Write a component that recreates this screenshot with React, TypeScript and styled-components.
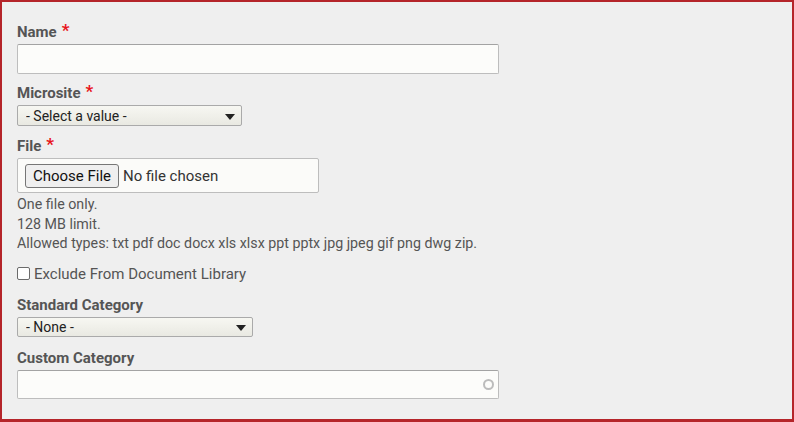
import React from "react";
import styled, { createGlobalStyle } from "styled-components";

const GlobalStyle = createGlobalStyle`
  html, body {
    margin: 0;
    padding: 0;
    background: #efefef;
  }
  body {
    font-family: Roboto, "Liberation Sans", Arial, sans-serif;
  }
`;

const Frame = styled.form`
  box-sizing: border-box;
  width: 794px;
  height: 422px;
  border: 2px solid #b5252a;
  border-bottom-width: 3px;
  background: #efefef;
  padding: 20px 15px 0;
  overflow: hidden;
`;

const Field = styled.div<{ $gap?: number }>`
  margin-bottom: ${(p) => p.$gap ?? 9}px;
`;

const Label = styled.label`
  display: block;
  height: 20px;
  font-size: 15px;
  line-height: 20px;
  font-weight: 700;
  color: #555;
  margin-bottom: 2px;
`;

const Required = styled.span`
  color: #e8141b;
  font-size: 17px;
  line-height: 0;
  margin-left: 5px;
  vertical-align: 1px;
`;

const TextInput = styled.input<{ $h?: number }>`
  box-sizing: border-box;
  display: block;
  width: 482px;
  height: ${(p) => p.$h ?? 30}px;
  margin: 0;
  padding: 0 6px;
  background: #fcfcfa;
  border: 1px solid #bdbdbd;
  border-top-color: #a3a3a3;
  border-radius: 2px;
  font: 14px Roboto, sans-serif;
  color: #333;
  outline: none;
`;

const SelectWrap = styled.div<{ $w: number; $h: number }>`
  position: relative;
  width: ${(p) => p.$w}px;
  height: ${(p) => p.$h}px;

  &::after {
    content: "";
    position: absolute;
    right: 7px;
    top: 50%;
    margin-top: -2px;
    border-left: 5px solid transparent;
    border-right: 5px solid transparent;
    border-top: 6px solid #222;
    pointer-events: none;
  }
`;

const Select = styled.select`
  box-sizing: border-box;
  appearance: none;
  width: 100%;
  height: 100%;
  margin: 0;
  padding: 0 20px 0 8px;
  background: linear-gradient(#f7f7f2, #e9e9e2);
  border: 1px solid #aaa;
  border-radius: 2px;
  font: 14px Roboto, sans-serif;
  line-height: 18px;
  color: #222;
  outline: none;
`;

const FileBox = styled.div`
  box-sizing: border-box;
  display: flex;
  align-items: center;
  gap: 4px;
  width: 302px;
  height: 35px;
  padding: 0 7px;
  background: #fbfbf9;
  border: 1px solid #bdbdbd;
  border-radius: 2px;
`;

const FileButton = styled.button`
  box-sizing: border-box;
  width: 94px;
  height: 24px;
  padding: 0;
  background: #efefef;
  border: 1px solid #767676;
  border-radius: 3px;
  font: 15px Roboto, sans-serif;
  color: #111;
`;

const FileName = styled.span`
  font-size: 15px;
  color: #333;
`;

const Description = styled.div`
  margin-top: 2px;
  font-size: 14.25px;
  line-height: 19.5px;
  color: #555;
`;

const CheckRow = styled.label`
  display: flex;
  align-items: center;
  gap: 4px;
  font-size: 15px;
  line-height: 20px;
  color: #555;
`;

const Checkbox = styled.input`
  box-sizing: border-box;
  appearance: none;
  width: 13px;
  height: 13px;
  margin: 0;
  background: #fff;
  border: 1px solid #6b6b6b;
  border-radius: 2px;
`;

const InputWrap = styled.div`
  position: relative;
  width: 482px;
`;

const Throbber = styled.span`
  position: absolute;
  right: 5px;
  top: 50%;
  width: 7px;
  height: 7px;
  margin-top: -5px;
  border: 2px solid #bcbcbc;
  border-radius: 50%;
`;

export default function App() {
  return (
    <>
      <GlobalStyle />
      <Frame>
        <Field>
          <Label>
            Name<Required>*</Required>
          </Label>
          <TextInput type="text" />
        </Field>

        <Field $gap={10}>
          <Label>
            Microsite<Required>*</Required>
          </Label>
          <SelectWrap $w={225} $h={21}>
            <Select defaultValue="">
              <option value="">- Select a value -</option>
            </Select>
          </SelectWrap>
        </Field>

        <Field $gap={10}>
          <Label>
            File<Required>*</Required>
          </Label>
          <FileBox>
            <FileButton type="button">Choose File</FileButton>
            <FileName>No file chosen</FileName>
          </FileBox>
          <Description>
            One file only.
            <br />
            128 MB limit.
            <br />
            Allowed types: txt pdf doc docx xls xlsx ppt pptx jpg jpeg gif png dwg zip.
          </Description>
        </Field>

        <Field $gap={11}>
          <CheckRow>
            <Checkbox type="checkbox" />
            Exclude From Document Library
          </CheckRow>
        </Field>

        <Field $gap={11}>
          <Label>Standard Category</Label>
          <SelectWrap $w={236} $h={20}>
            <Select defaultValue="">
              <option value="">- None -</option>
            </Select>
          </SelectWrap>
        </Field>

        <Field>
          <Label>Custom Category</Label>
          <InputWrap>
            <TextInput type="text" $h={29} />
            <Throbber />
          </InputWrap>
        </Field>
      </Frame>
    </>
  );
}
